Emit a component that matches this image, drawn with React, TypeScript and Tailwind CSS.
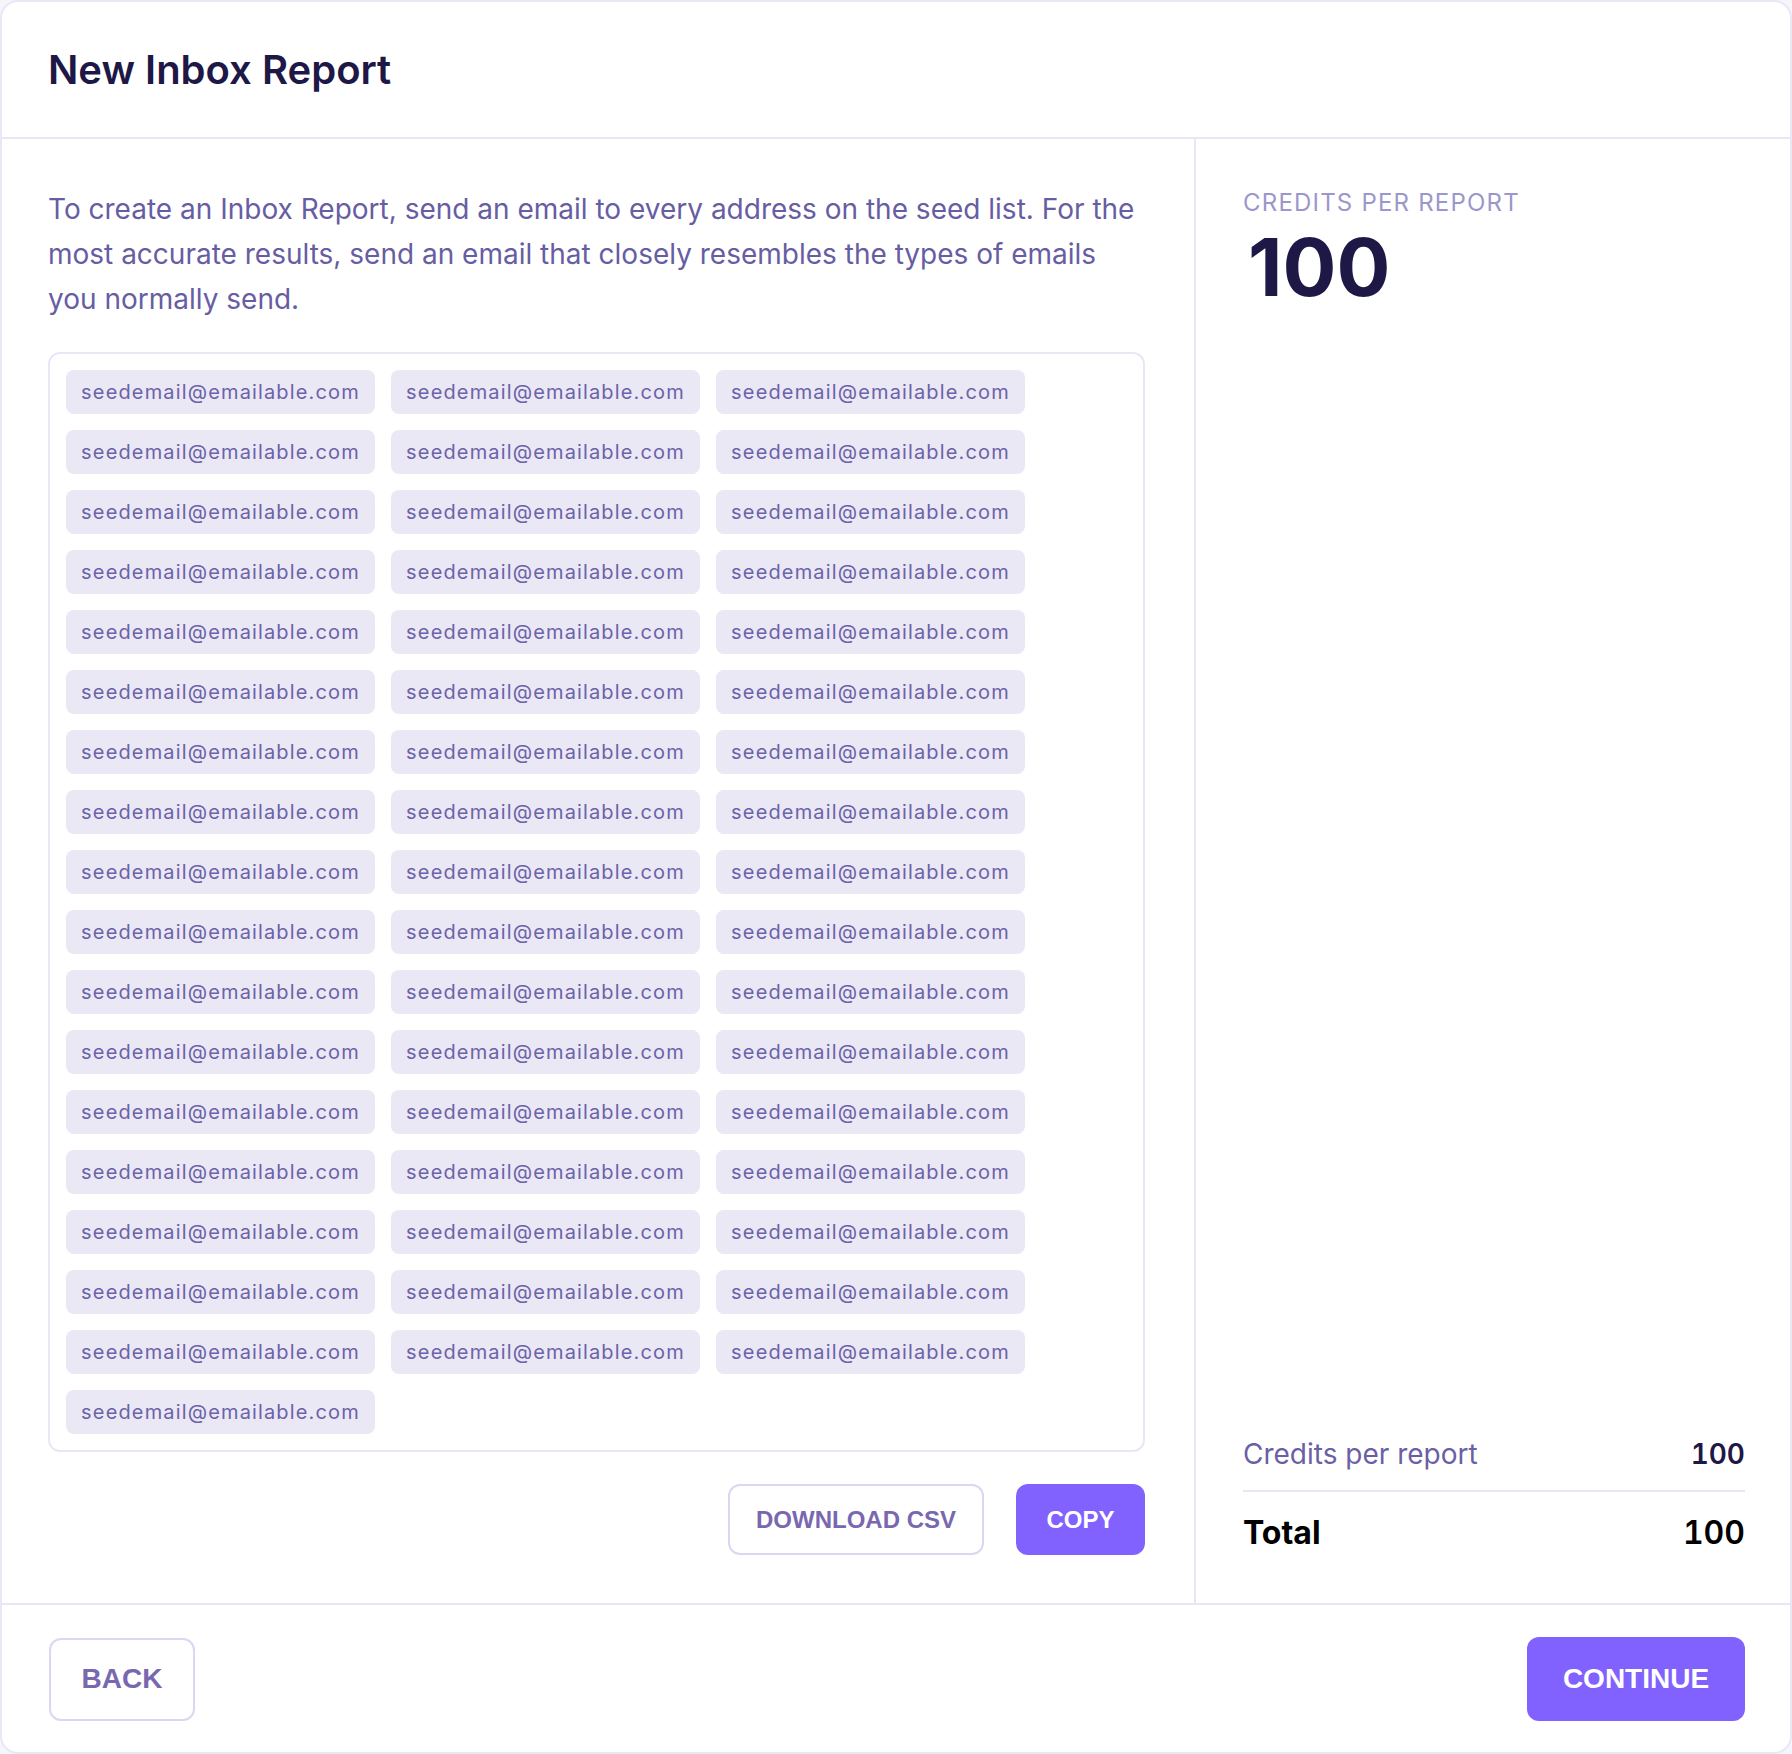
const emails = Array.from({ length: 52 }, () => "seedemail@emailable.com");

const App = () => {
  return (
    <div className="min-h-screen bg-[#f6f5fc] font-['Inter',sans-serif]">
      <div className="flex h-[1754px] flex-col overflow-hidden rounded-[18px] border-2 border-[#e9e7f6] bg-white">
        <header className="flex h-[137px] shrink-0 items-center border-b-2 border-[#e9e7f6] px-[46px]">
          <h1 className="text-[40px] font-semibold text-[#1d1845]">New Inbox Report</h1>
        </header>

        <div className="flex flex-1">
          <section className="w-[1194px] shrink-0 border-r-2 border-[#e9e7f6] pb-12 pl-[46px] pr-[49px] pt-12">
            <p className="text-[28px] leading-[45px] text-[#675da3]">
              To create an Inbox Report, send an email to every address on the seed list. For the most accurate
              results, send an email that closely resembles the types of emails you normally send.
            </p>

            <div className="mt-[30px] rounded-xl border-2 border-[#e9e7f6] p-4">
              <div className="flex flex-wrap gap-x-4 gap-y-4">
                {emails.map((email, i) => (
                  <span
                    key={i}
                    className="w-[309px] rounded-lg bg-[#eae8f4] py-2 text-center text-[20px] leading-7 tracking-[1.15px] text-[#6c62a9]"
                  >
                    {email}
                  </span>
                ))}
              </div>
            </div>

            <div className="mt-8 flex justify-end gap-8 font-['Liberation_Sans',Arial,sans-serif]">
              <button className="h-[71px] w-[256px] rounded-xl border-2 border-[#d9d7f1] bg-white text-[24px] font-bold text-[#7868b0]">
                DOWNLOAD CSV
              </button>
              <button className="h-[71px] w-[129px] rounded-xl bg-[#8162ff] text-[24px] font-bold text-white">
                COPY
              </button>
            </div>
          </section>

          <aside className="flex flex-1 flex-col justify-between pb-[50px] pl-[47px] pr-[45px] pt-12">
            <div>
              <div className="text-[24px] leading-8 tracking-[1.2px] text-[#9b97cb]">CREDITS PER REPORT</div>
              <div className="mt-[4px] pl-[5px] text-[80px] font-bold leading-[1.1] text-[#1d1845]">100</div>
            </div>

            <div>
              <div className="flex items-center justify-between leading-10">
                <span className="text-[28px] text-[#6b5fa5]">Credits per report</span>
                <span className="text-[28px] font-semibold tabular-nums text-[#1d1845]">100</span>
              </div>
              <div className="mt-4 h-[2px] bg-[#e9e7f6]" />
              <div className="mt-[21px] flex items-center justify-between leading-10">
                <span className="text-[32px] font-bold text-black">Total</span>
                <span className="text-[32px] font-semibold tabular-nums text-black">100</span>
              </div>
            </div>
          </aside>
        </div>

        <footer className="flex shrink-0 items-center justify-between border-t-2 border-[#e9e7f6] pl-[47px] pr-[45px] py-8 font-['Liberation_Sans',Arial,sans-serif]">
          <button className="h-[83px] w-[146px] rounded-xl border-2 border-[#d9d7f1] bg-white text-[28px] font-bold text-[#7868b0]">
            BACK
          </button>
          <button className="h-[84px] w-[218px] rounded-xl bg-[#8162ff] text-[28px] font-bold text-white">
            CONTINUE
          </button>
        </footer>
      </div>
    </div>
  );
};

export default App;
